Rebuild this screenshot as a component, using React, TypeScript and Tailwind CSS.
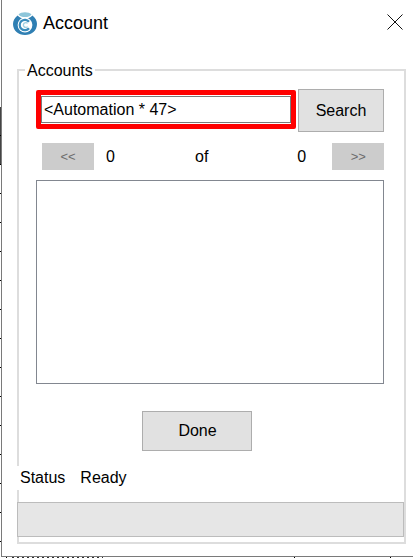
const font = "font-['Liberation_Sans',Arial,sans-serif]"

function Logo() {
  return (
    <svg width="26" height="26" viewBox="0 0 26 26" className="shrink-0">
      <path d="M6.5 4.5 C9 1.5 17 1.5 19.5 4.5 C18 6.5 16 7 13 7 C10 7 8 6.5 6.5 4.5 Z" fill="#8ec6da" />
      <path d="M5.5 5.5 C8 8 10 8.6 13 8.6 C16 8.6 18 8 20.5 5.5 C23.5 8 25 11 25 14 C25 20.6 19.6 25 13 25 C6.4 25 1 20.6 1 14 C1 11 2.5 8 5.5 5.5 Z" fill="#2f7fb3" />
      <circle cx="13" cy="15" r="7.4" fill="#ffffff" />
      <path d="M17 11.8 A5.2 5.2 0 1 0 17 18.2" fill="none" stroke="#3a8dbd" strokeWidth="2.2" />
      <path d="M15.6 13.4 A2.4 2.4 0 1 0 15.6 16.6" fill="none" stroke="#9fd0e2" strokeWidth="1.4" />
    </svg>
  )
}

function PageButton({ label }: { label: string }) {
  return (
    <button className="w-[52px] h-[27px] bg-[#cccccc] text-[#6d6d6d] text-[13px] flex items-center justify-center">
      {label}
    </button>
  )
}

// rows and columns of the sheet behind the window, showing around its edge
const rowTicks = [135, 164, 193, 222, 251, 280, 309, 338, 367, 396, 425, 454, 483, 512, 541]
const colTicks = [6, 294, 390]

export default function App() {
  return (
    <div className={`${font} relative w-[413px] h-[558px] bg-white text-black overflow-hidden`}>
      <div className="absolute left-0 top-[107px] w-[1px] h-[58px] bg-[#444444]" />
      {rowTicks.map((y) => (
        <div key={y} className="absolute left-0 w-[1px] h-[1px] bg-black" style={{ top: y }} />
      ))}
      {colTicks.map((x) => (
        <div key={x} className="absolute bottom-0 w-[1px] h-[1px] bg-black" style={{ left: x }} />
      ))}
      <div className="absolute bottom-0 left-[12px] w-[91px] h-[1px] bg-[repeating-linear-gradient(90deg,#333333_0,#333333_2px,transparent_2px,transparent_5px)]" />
      <div className="ml-[1px] h-[557px] border-l border-b border-[#7a7a7a] flex flex-col">
        <div className="h-[45px] pt-[1px] flex items-center pl-[10px] pr-[10px] shrink-0">
          <Logo />
          <span className="ml-[5px] text-[18px]">Account</span>
          <svg width="16" height="16" viewBox="0 0 16 16" className="ml-auto -translate-y-[1px]">
            <path d="M0.5 0.5 L15.5 15.5 M15.5 0.5 L0.5 15.5" stroke="#111111" strokeWidth="1" fill="none" />
          </svg>
        </div>

        <div className="relative mt-[24px] ml-[15px] w-[389px] h-[475px] border-2 border-[#dddddd] pt-[18px] pl-[17px] pr-[19px]">
          <span className="absolute left-[6px] -top-[9px] bg-white px-[2px] text-[16px] leading-[18px]">Accounts</span>

          <div className="flex items-start">
            <div className="w-[260px] h-[39px] mt-[1px] border-[5px] border-[#ff0000] rounded-[2px] flex items-center">
              <div className="w-[250px] h-[27px] border border-[#7a7a7a] flex items-center pl-[2px] text-[16px]">
                &lt;Automation * 47&gt;
              </div>
            </div>
            <button className="ml-[2px] w-[86px] h-[43px] bg-[#e1e1e1] border border-[#adadad] text-[16px]">Search</button>
          </div>

          <div className="flex items-center mt-[11px] pl-[6px] text-[16px]">
            <PageButton label="<<" />
            <span className="ml-[12px] w-[10px]">0</span>
            <span className="ml-[79px]">of</span>
            <span className="ml-[89px] w-[10px]">0</span>
            <span className="ml-[25px]"><PageButton label=">>" /></span>
          </div>

          <div className="mt-[10px] w-[348px] h-[204px] border border-[#828790] bg-white" />

          <button className="block mt-[27px] ml-[106px] w-[110px] h-[40px] pl-[1px] bg-[#e1e1e1] border border-[#adadad] text-[16px]">Done</button>

          <div className="absolute -left-[2px] top-[395px] h-[24px] bg-white flex items-center pl-[3px] pr-[3px] gap-[15px] text-[16px]">
            <span>Status</span>
            <span>Ready</span>
          </div>

          <div className="absolute -left-[2px] top-[431px] w-[387px] h-[35px] bg-[#e6e6e6] border border-[#bcbcbc]" />
        </div>
      </div>
    </div>
  )
}
